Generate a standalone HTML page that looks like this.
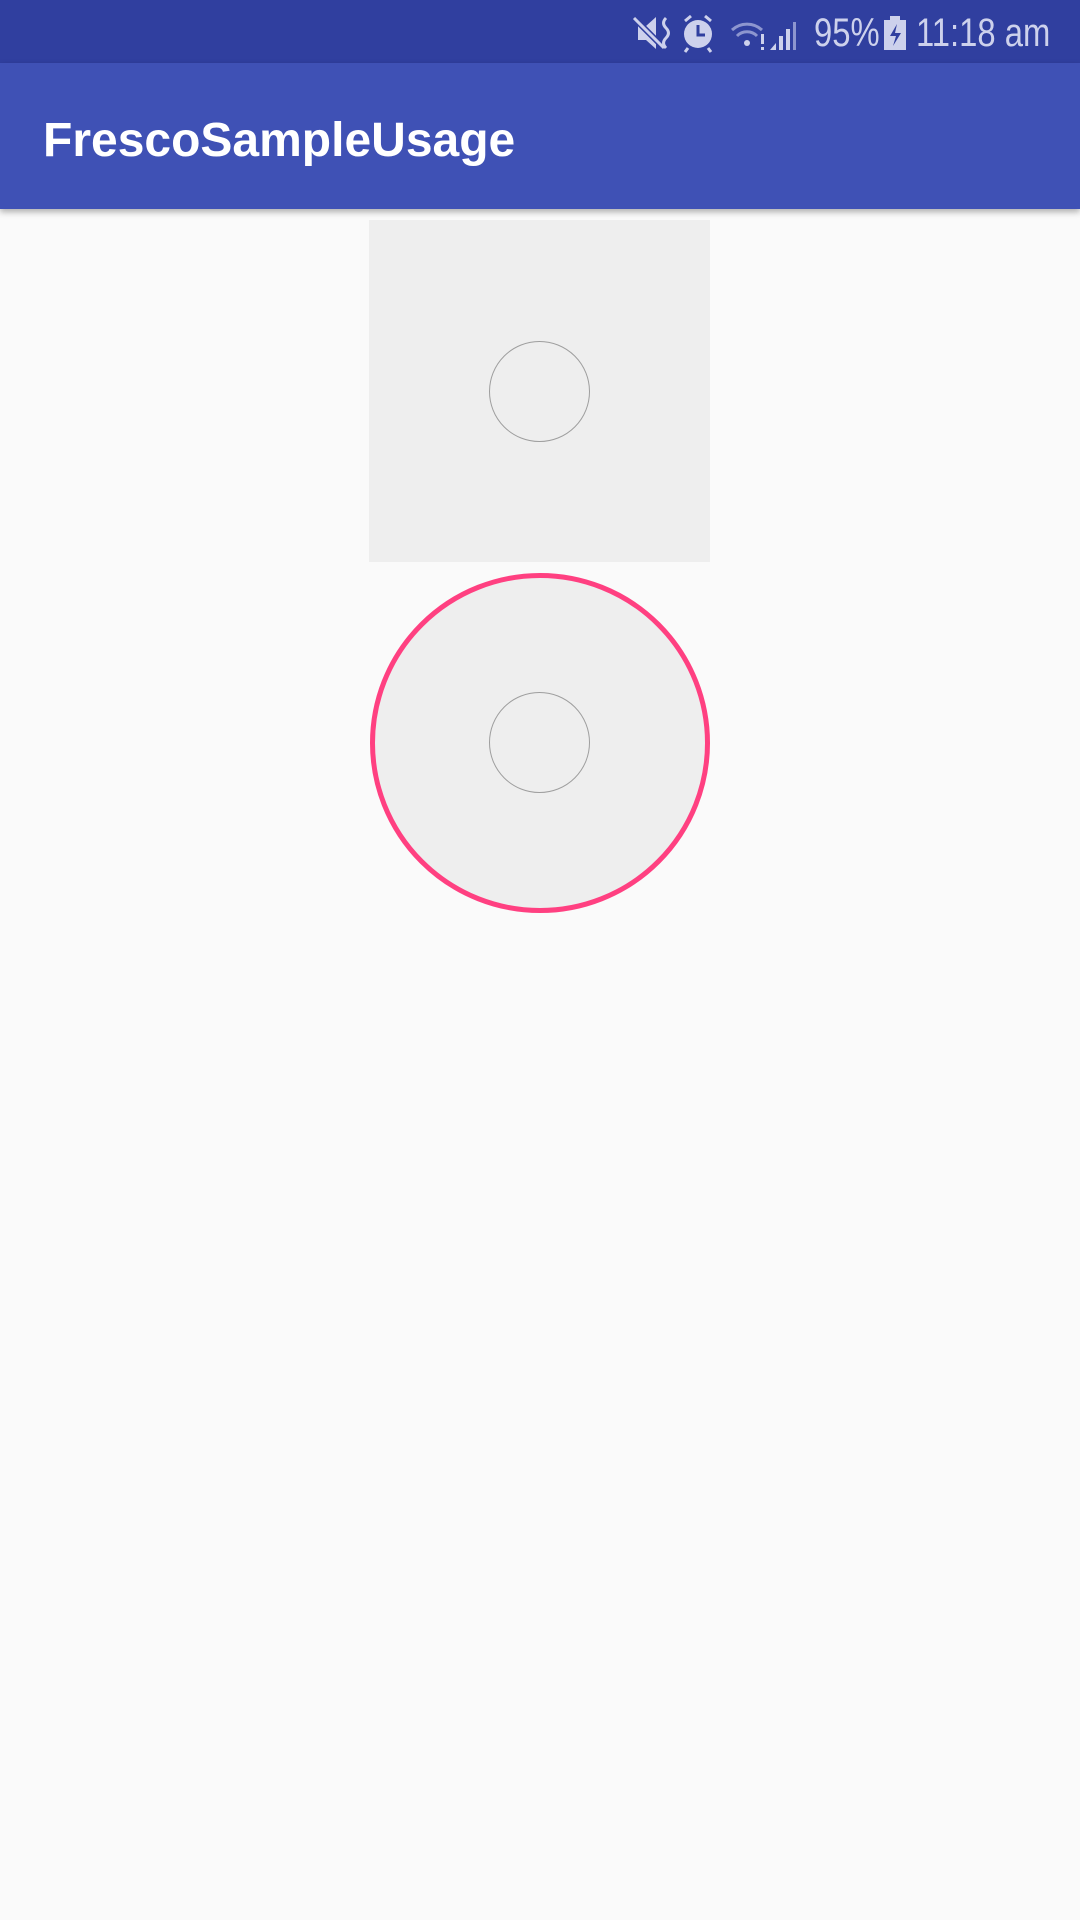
<!DOCTYPE html>
<html><head><style>
body{margin:0;width:1080px;height:1920px;background:#fafafa;position:relative;overflow:hidden;font-family:"Liberation Sans",sans-serif}
.sb{position:absolute;left:0;top:0;width:1080px;height:63px;background:#303f9f}
.ab{position:absolute;left:0;top:63px;width:1080px;height:146px;background:#3f51b5;box-shadow:0 3px 6px rgba(0,0,0,.3)}
.t{position:absolute;left:43px;top:111px;color:#fff;font-size:48px;font-weight:bold;line-height:60px}
.st{position:absolute;top:10px;color:#cdd1ec;font-size:40px;line-height:46px;transform:scaleX(.82);transform-origin:left}
</style></head><body>
<div class="sb"></div>
<div class="ab"></div>
<div class="t">FrescoSampleUsage</div>
<svg style="position:absolute;left:630px;top:12px" width="180" height="42" viewBox="0 0 180 42">
<g fill="#cdd1ec">
<polygon points="8,14 16,14 26,5 26,37 16,28 8,28"/>
<path d="M4 6 L34 36" stroke="#303f9f" stroke-width="6"/>
<path d="M4 6 L34 36" stroke="#cdd1ec" stroke-width="3"/>
<path d="M36 6 q-5 5 0 10 q5 5 0 10 q-5 5 0 10" stroke="#cdd1ec" stroke-width="3" fill="none"/>
<circle cx="68" cy="22" r="14"/>
<path d="M68 13 v10 h7" stroke="#303f9f" stroke-width="3" fill="none"/>
<path d="M55 9 l6-5 M81 9 l-6-5 M58 36 l-3 4 M78 36 l3 4" stroke="#cdd1ec" stroke-width="3"/>
<path d="M102 18 a22 22 0 0 1 30 0 M107 24 a14 14 0 0 1 20 0" stroke="#8d96cf" stroke-width="3" fill="none"/>
<circle cx="117" cy="31" r="3"/>
<rect x="131" y="22" width="3" height="10"/><rect x="131" y="35" width="3" height="3"/>
<polygon points="140,38 146,38 146,31"/>
<rect x="149" y="24" width="4" height="14"/><rect x="156" y="17" width="4" height="21"/>
<rect x="163" y="10" width="3" height="28" fill="#8d96cf"/>
</g></svg>
<div class="st" style="left:814px">95%</div>
<svg style="position:absolute;left:884px;top:16px" width="22" height="34"><rect x="0" y="4" width="22" height="30" fill="#cdd1ec"/><rect x="6" y="0" width="10" height="5" fill="#cdd1ec"/><path d="M13 8 L6 20 h6 l-3 10 l8-13 h-6z" fill="#303f9f"/></svg>
<div class="st" style="left:916px">11:18 am</div>
<div style="position:absolute;left:369px;top:220px;width:341px;height:342px;background:#eeeeee"></div>
<div style="position:absolute;left:489px;top:341px;width:99px;height:99px;border:1px solid #9e9e9e;border-radius:50%"></div>
<div style="position:absolute;left:370px;top:573px;width:330px;height:330px;border:5px solid #ff4081;border-radius:50%;background:#eeeeee"></div>
<div style="position:absolute;left:489px;top:692px;width:99px;height:99px;border:1px solid #9e9e9e;border-radius:50%"></div>
</body></html>
